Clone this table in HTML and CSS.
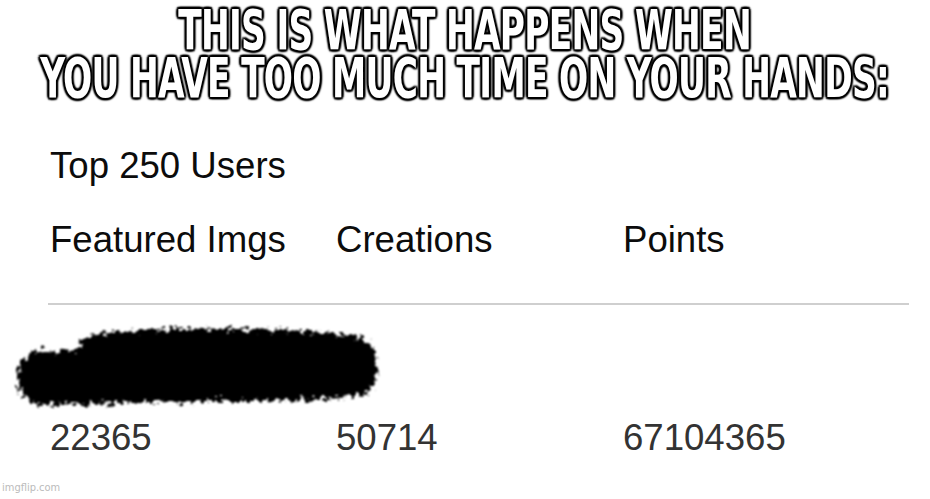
FILE: index.html
```html
<!DOCTYPE html>
<html>
<head>
<meta charset="utf-8">
<link rel="stylesheet" href="styles.css">
</head>
<body>
<div class="page">
  <div class="meme-title">
    <div class="meme-line">THIS IS WHAT HAPPENS WHEN</div>
    <div class="meme-line">YOU HAVE TOO MUCH TIME ON YOUR HANDS:</div>
  </div>
  <div class="board">
    <div class="board-title">Top 250 Users</div>
    <div class="row head">
      <div>Featured Imgs</div>
      <div>Creations</div>
      <div>Points</div>
    </div>
    <div class="rule"></div>
    <div class="scribble">
      <svg width="390" height="100" viewBox="0 0 390 100">
        <defs>
          <filter id="rough" x="-10%" y="-30%" width="120%" height="160%">
            <feTurbulence type="fractalNoise" baseFrequency="0.2" numOctaves="3" seed="4" result="n"/>
            <feDisplacementMap in="SourceGraphic" in2="n" scale="16" xChannelSelector="R" yChannelSelector="G" result="d"/>
            <feGaussianBlur in="d" stdDeviation="0.9"/>
          </filter>
        </defs>
        <path filter="url(#rough)" fill="#000" d="M14 40 C 16 32, 32 30, 52 32 L 66 32 C 68 18, 84 14, 114 12 C 164 9, 234 9, 294 12 C 336 14, 358 18, 364 30 C 370 46, 369 66, 358 74 C 336 82, 256 82, 186 82 C 126 83, 64 86, 34 86 C 16 84, 8 74, 8 60 C 8 50, 10 44, 14 40 Z"/>
      </svg>
    </div>
    <div class="row nums">
      <div>22365</div>
      <div>50714</div>
      <div>67104365</div>
    </div>
  </div>
  <div class="watermark">imgflip.com</div>
</div>
</body>
</html>
```
FILE: styles.css
```css
html, body {
  margin: 0;
  padding: 0;
  background: #fff;
}
.page {
  position: relative;
  width: 930px;
  height: 499px;
  overflow: hidden;
  font-family: "Liberation Sans", Arial, sans-serif;
}
.meme-title {
  display: flex;
  flex-direction: column;
  align-items: center;
  padding-top: 6px;
  height: 141px;
  box-sizing: border-box;
  white-space: nowrap;
  font-family: "DejaVu Sans Condensed", "DejaVu Sans", sans-serif;
  font-weight: bold;
  font-stretch: condensed;
  font-size: 55px;
  line-height: 48px;
  color: #fff;
  text-shadow:
    2px 2px 2px #000, -2px -2px 2px #000, 2px -2px 2px #000, -2px 2px 2px #000,
    0 2px 2px #000, 0 -2px 2px #000, 3px 0 2px #000, -3px 0 2px #000,
    0 0 4px #000;
  letter-spacing: -1px;
}
.meme-line {
  flex: none;
  transform: scaleX(0.694);
}
.board {
  margin-left: 50px;
  width: 859px;
  font-size: 36.6px;
  line-height: 37px;
  color: #0c0c0c;
}
.board-title {
  margin-top: 6px;
  height: 37px;
}
.row {
  display: grid;
  grid-template-columns: 286px 287px auto;
}
.head {
  margin-top: 37px;
}
.rule {
  margin-top: 45px;
  margin-left: -2px;
  height: 2px;
  background: #cfcfcf;
}
.scribble {
  margin-left: -40px;
  margin-top: 14px;
  height: 100px;
}
.scribble svg {
  display: block;
}
.nums {
  color: #333;
}
.watermark {
  position: absolute;
  left: 2px;
  bottom: 5px;
  font-family: "DejaVu Sans Condensed", sans-serif;
  font-size: 11px;
  color: #bbb;
}
```
